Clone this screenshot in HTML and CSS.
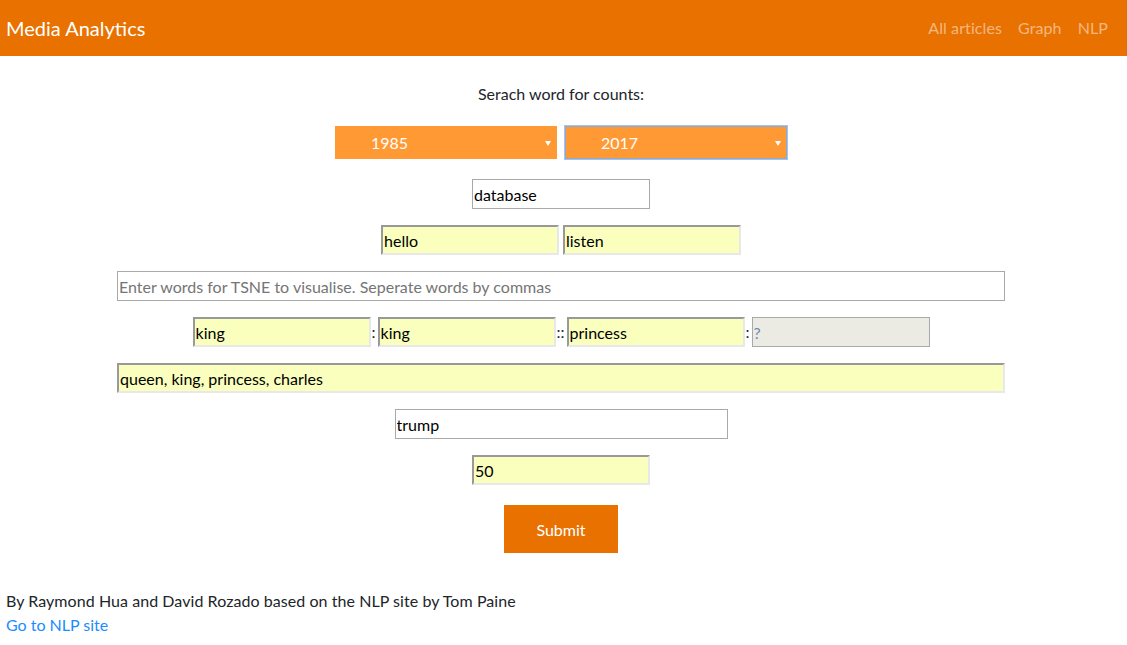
FILE: index.html
```html
<!DOCTYPE html>
<html lang="en">
<head>
<meta charset="utf-8">
<title>Media Analytics</title>
<link rel="stylesheet" href="styles.css">
</head>
<body>
<nav class="navbar">
  <a class="brand" href="#">Media Analytics</a>
  <ul class="nav-links">
    <li><a href="#">All articles</a></li>
    <li><a href="#">Graph</a></li>
    <li><a href="#">NLP</a></li>
  </ul>
</nav>
<main class="form">
  <p class="label">Serach word for counts:</p>
  <div class="row row-selects">
    <div class="select-wrap"><select class="year"><option>1985</option></select></div>
    <div class="select-wrap"><select class="year focused"><option>2017</option></select></div>
  </div>
  <div class="row"><input class="field plain w178" type="text" value="database"></div>
  <div class="row row-pair">
    <input class="field auto w178" type="text" value="hello">
    <input class="field auto w178" type="text" value="listen">
  </div>
  <div class="row"><input class="field plain w888" type="text" placeholder="Enter words for TSNE to visualise. Seperate words by commas"></div>
  <div class="row row-analogy">
    <input class="field auto w178" type="text" value="king"><span class="sep">:</span><input class="field auto w178" type="text" value="king"><span class="sep">::</span><input class="field auto w178" type="text" value="princess"><span class="sep">:</span><input class="field disabled w178" type="text" placeholder="?" disabled>
  </div>
  <div class="row"><input class="field auto w888" type="text" value="queen, king, princess, charles"></div>
  <div class="row"><input class="field plain w333" type="text" value="trump"></div>
  <div class="row"><input class="field auto w178" type="text" value="50"></div>
  <div class="row row-submit"><button class="submit" type="button">Submit</button></div>
</main>
<footer class="footer">
  <p>By Raymond Hua and David Rozado based on the NLP site by Tom Paine</p>
  <a href="#">Go to NLP site</a>
</footer>
</body>
</html>
```
FILE: styles.css
```css
* { box-sizing: border-box; }
html, body { margin: 0; padding: 0; }
body {
  font-family: Lato, "Noto Sans", "Liberation Sans", sans-serif;
  font-size: 16px;
  line-height: 24px;
  color: #212529;
  background: #fff;
  width: 1127px;
  height: 645px;
  overflow: hidden;
}
.navbar {
  height: 56px;
  background: #e87100;
  display: flex;
  align-items: center;
  justify-content: space-between;
  padding: 0 11px 0 6px;
}
.brand {
  color: #fff;
  font-size: 20px;
  text-decoration: none;
  line-height: 30px;
}
.nav-links {
  list-style: none;
  margin: 0;
  padding: 0;
  display: flex;
}
.nav-links a {
  display: block;
  padding: 8px;
  color: rgba(255, 255, 255, 0.5);
  text-decoration: none;
  letter-spacing: 0.1px;
}
.form {
  display: flex;
  flex-direction: column;
  align-items: center;
  padding: 26px 5px 0 0;
}
.label { margin: 0 0 20px; line-height: 24px; }
.row {
  display: flex;
  align-items: center;
  justify-content: center;
  margin-bottom: 16px;
}
.row-selects { gap: 8px; margin-bottom: 20px; }
.row-pair { gap: 4px; }
.select-wrap { position: relative; width: 222px; height: 33px; }
.select-wrap::after {
  content: "";
  position: absolute;
  right: 6px;
  top: 15px;
  border-left: 3px solid transparent;
  border-right: 3px solid transparent;
  border-top: 5px solid #fff;
  pointer-events: none;
}
.year {
  -webkit-appearance: none;
  appearance: none;
  width: 100%;
  height: 100%;
  background: #ff9933;
  color: #fff;
  border: 1px solid #ff9933;
  border-radius: 0;
  font-family: inherit;
  font-size: 16px;
  padding: 0 0 0 35px;
  margin: 0;
  outline: none;
}
.year.focused { border-color: #8aa9d6; box-shadow: 0 0 0 1px #a9c2e6; }
.field {
  height: 30px;
  margin: 0;
  padding: 0 1px;
  font-family: inherit;
  font-size: 16px;
  color: #000;
  border-radius: 0;
  outline: none;
}
.field::placeholder { color: #757575; }
.plain { background: #fff; border: 1px solid #a9a9a9; }
.auto {
  background: #faffbd;
  border-style: solid;
  border-width: 2px;
  border-color: #999 #e8e8e8 #e8e8e8 #999;
}
.disabled { background: #ebebe4; border: 1px solid #a9a9a9; }
.disabled::placeholder { color: #6b8bb0; }
.w178 { width: 178px; }
.w333 { width: 333px; }
.w888 { width: 888px; }
.sep { padding: 0 2px 0 1px; color: #212529; }
.row-submit { margin-top: 4px; margin-bottom: 0; }
.submit {
  width: 114px;
  height: 48px;
  background: #e87100;
  color: #fff;
  border: none;
  border-radius: 0;
  font-family: inherit;
  font-size: 16px;
}
.footer { padding: 36px 6px 0; }
.footer p { margin: 0; letter-spacing: 0.06px; }
.footer a { color: #1a8cff; text-decoration: none; }
```
